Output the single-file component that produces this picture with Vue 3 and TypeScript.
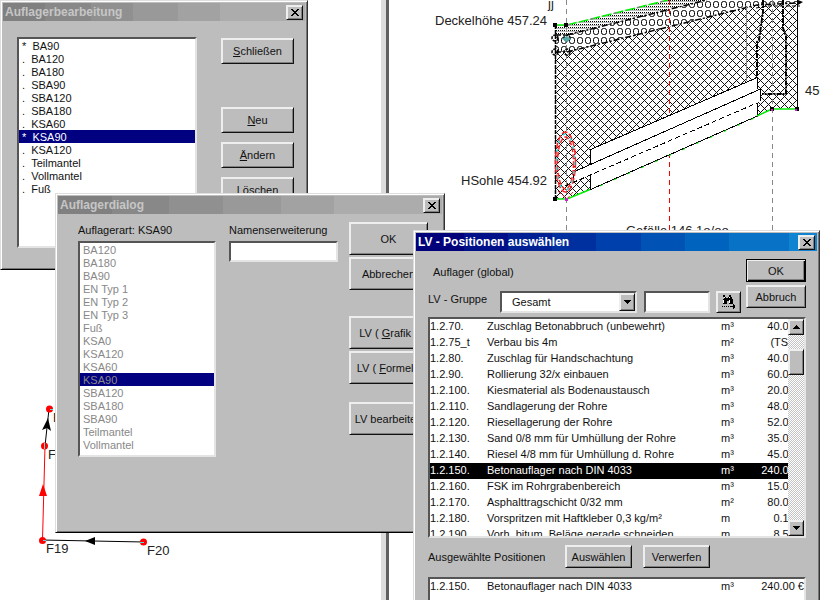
<script setup lang="ts">
import { ref } from 'vue'

interface Bedding {
  name: string
  used: boolean
}

interface Position {
  id: string
  text: string
  unit: string
  price: string
}

const beddings: Bedding[] = [
  { name: 'BA90', used: true },
  { name: 'BA120', used: false },
  { name: 'BA180', used: false },
  { name: 'SBA90', used: false },
  { name: 'SBA120', used: false },
  { name: 'SBA180', used: false },
  { name: 'KSA60', used: false },
  { name: 'KSA90', used: true },
  { name: 'KSA120', used: false },
  { name: 'Teilmantel', used: false },
  { name: 'Vollmantel', used: false },
  { name: 'Fuß', used: false },
]

const types: string[] = [
  'BA120', 'BA180', 'BA90', 'EN Typ 1', 'EN Typ 2', 'EN Typ 3', 'Fuß', 'KSA0',
  'KSA120', 'KSA60', 'KSA90', 'SBA120', 'SBA180', 'SBA90', 'Teilmantel', 'Vollmantel',
]

const positions: Position[] = [
  { id: '1.2.70.', text: 'Zuschlag Betonabbruch (unbewehrt)', unit: 'm³', price: '40.00 €' },
  { id: '1.2.75_t', text: 'Verbau bis 4m', unit: 'm²', price: '(TS)  €' },
  { id: '1.2.80.', text: 'Zuschlag für Handschachtung', unit: 'm³', price: '40.00 €' },
  { id: '1.2.90.', text: 'Rollierung 32/x einbauen', unit: 'm³', price: '60.00 €' },
  { id: '1.2.100.', text: 'Kiesmaterial als Bodenaustausch', unit: 'm³', price: '20.00 €' },
  { id: '1.2.110.', text: 'Sandlagerung der Rohre', unit: 'm³', price: '48.00 €' },
  { id: '1.2.120.', text: 'Riesellagerung der Rohre', unit: 'm³', price: '52.00 €' },
  { id: '1.2.130.', text: 'Sand 0/8 mm für Umhüllung der Rohre', unit: 'm³', price: '35.00 €' },
  { id: '1.2.140.', text: 'Riesel 4/8 mm für Umhüllung d. Rohre', unit: 'm³', price: '45.00 €' },
  { id: '1.2.150.', text: 'Betonauflager nach DIN 4033', unit: 'm³', price: '240.00 €' },
  { id: '1.2.160.', text: 'FSK im Rohrgrabenbereich', unit: 'm³', price: '15.00 €' },
  { id: '1.2.170.', text: 'Asphalttragschicht 0/32 mm', unit: 'm²', price: '80.00 €' },
  { id: '1.2.180.', text: 'Vorspritzen mit Haftkleber 0,3 kg/m²', unit: 'm', price: '0.10 €' },
  { id: '1.2.190.', text: 'Vorh. bitum. Beläge gerade schneiden', unit: 'm', price: '8.50 €' },
]

const bedding = ref('KSA90')
const beddingType = ref('KSA90')
const extension = ref('')
const group = ref('Gesamt')
const search = ref('')
const current = ref('1.2.150.')
const chosen = ref<Position[]>([positions[9]])
</script>

<template>
  <main class="desktop">
    <svg class="drawing" width="820" height="600" viewBox="0 0 820 600" aria-hidden="true">
      <defs>
        <pattern id="cross" width="8" height="8" patternUnits="userSpaceOnUse">
          <path d="M0 0h1v1h-1zM1 1h1v1h-1zM2 2h1v1h-1zM3 3h1v1h-1zM4 4h1v1h-1zM5 5h1v1h-1zM6 6h1v1h-1zM7 7h1v1h-1zM1 7h1v1h-1zM2 6h1v1h-1zM3 5h1v1h-1zM5 3h1v1h-1zM6 2h1v1h-1zM7 1h1v1h-1z" fill="#111" shape-rendering="crispEdges" />
        </pattern>
        <pattern id="dots" width="2" height="3" patternUnits="userSpaceOnUse">
          <rect width="1" height="1" fill="#000" />
          <rect y="1" width="2" height="1" fill="#bbb" />
        </pattern>
        <pattern id="gravel" width="8" height="9" patternUnits="userSpaceOnUse">
          <rect x="1.5" y="1.5" width="5" height="6" rx="2" fill="none" stroke="#000" />
        </pattern>
      </defs>

      <!-- trench profile -->
      <path d="M555 52H567L757 5L797 3V109H772L757 116L590 190L567 199H555Z" fill="url(#cross)" />
      <path d="M555 35H567L707 0H797V3L757 5L567 52H555Z" fill="#fff" />
      <path d="M555 35H567L707 0H797V3L757 5L567 52H555Z" fill="url(#gravel)" />
      <path d="M555 25H567L668 0H707L567 35H555Z" fill="url(#dots)" />
      <path d="M555 35H567L707 0M555 52H567L757 5L797 3" fill="none" stroke="#000" stroke-width="1.5" stroke-dasharray="6 2 2 2" />
      <path d="M555.5 25V199" stroke="#000" stroke-width="1.5" stroke-dasharray="4 1" />
      <path d="M797.5 0V109" stroke="#000" />
      <path d="M746.5 7V81" stroke="#888" />
      <path d="M555 25H567L668 0" fill="none" stroke="#0e0" stroke-width="1.5" stroke-dasharray="10 2" />
      <path d="M567 25L668 0" fill="none" stroke="#c4c" stroke-dasharray="3 21" />

      <!-- shaft on the right -->
      <path d="M763 0V12L761 26L759 40L757 42V90M783 0V28L786 36V94H762" fill="none" stroke="#000" stroke-width="2" stroke-dasharray="5 1 2 1" />
      <path d="M756 8L768 6H800" fill="none" stroke="#000" stroke-dasharray="4 2" />
      <path d="M798 0L803 2L798 5Z" />

      <!-- axes -->
      <path d="M566.5 0V230M772.5 0V230" stroke="#888" stroke-dasharray="5 4" />
      <rect x="669" width="1" height="230" fill="#fff" />
      <path d="M669.5 0V230" stroke="#f00" stroke-width="1" stroke-dasharray="5 4" />

      <!-- pipe -->
      <path d="M590 149.5L757 77.5V89L760 89V101L757 103V116L590 189.5V175L573 182V172L590 164Z" fill="#fff" />
      <path d="M590.5 164V149.5L757.5 77.5V89M573.5 182V172L760.5 89V101M590.5 175V189.5L757.5 116V103" fill="none" stroke="#000" shape-rendering="crispEdges" />
      <path d="M565 186L757 103" stroke="#000" stroke-dasharray="5 3" shape-rendering="crispEdges" />
      <path d="M590 189.5L567 199H555M757 116L772 109H797" fill="none" stroke="#0e0" stroke-width="1.5" />
      <path d="M600 186L757 117" fill="none" stroke="#0e0" stroke-dasharray="3 12" />

      <!-- shaft bottom -->
      <ellipse cx="565.5" cy="162" rx="10" ry="30" fill="none" stroke="#f22" stroke-width="1.5" stroke-dasharray="6 2" />
      <ellipse cx="565.5" cy="163" rx="8" ry="26" fill="none" stroke="#f22" stroke-width="1.5" stroke-dasharray="5 2" />
      <ellipse cx="565.5" cy="162" rx="9" ry="28" fill="none" stroke="#3dd" stroke-width="1.5" stroke-dasharray="3 6" />
      <path d="M558 191L567 199L573 192" fill="none" stroke="#e22" stroke-dasharray="4 2" />
      <path d="M553 23h4v4h-4zM564 23h4v4h-4zM553 197h4v4h-4zM770 107h4v4h-4zM795 107h4v4h-4z" />
      <path d="M565 198h3v3h-3zM771 109h2v2h-2zM795 109h2v2h-2z" fill="#c2c" />
      <g fill="none" stroke="#000" stroke-width="1.5" stroke-dasharray="3 1">
        <circle cx="555" cy="38" r="3" /><circle cx="567" cy="38" r="3" />
        <circle cx="555" cy="52" r="3" /><circle cx="567" cy="52" r="3" />
      </g>
      <path d="M562 39L567 36L571 39L567 42Z" fill="#5aa" />

      <g class="annotation">
        <text x="548" y="8">jj</text>
        <text x="435" y="25">Deckelhöhe 457.24</text>
        <text x="461" y="185">HSohle 454.92</text>
        <text x="805" y="95">450.99</text>
        <text x="626" y="235">Gefälle 146.1o/oo</text>
      </g>

      <!-- sewer network -->
      <path d="M45 446L49 409M144 542L42 540" stroke="#000" />
      <path d="M42.5 540L45 446" stroke="#f00" />
      <path d="M48 418L51 431L47 428L42 430ZM85 541L95 537V545Z" />
      <path d="M43 484L47 496H39Z" fill="#f00" />
      <g fill="#f00">
        <circle cx="49.5" cy="409" r="3.5" /><circle cx="44.5" cy="446" r="3.5" />
        <circle cx="42.5" cy="540.5" r="3.5" /><circle cx="143.5" cy="542" r="3.5" />
      </g>
      <path d="M50 409.5H53M44.5 443V449M43 540.5H46M140 542.5H144" stroke="#5dd" />
      <g class="annotation">
        <text x="53" y="422">F17</text>
        <text x="48" y="459">F18</text>
        <text x="46" y="553">F19</text>
        <text x="147" y="555">F20</text>
      </g>
    </svg>
    <div class="divider"></div>

    <section class="window editor" aria-label="Auflagerbearbeitung">
      <header class="title inactive">
        <h2>Auflagerbearbeitung</h2>
        <button class="close" aria-label="Fenster schließen"><svg width="8" height="7" viewBox="0 0 8 7"><path d="M0 0h2v1h1v1h2v-1h1v-1h2v1h-1v1h-1v1h-1v1h1v1h1v1h1v1h-2v-1h-1v-1h-2v1h-1v1h-2v-1h1v-1h1v-1h1v-1h-1v-1h-1v-1h-1z" /></svg></button>
      </header>
      <div class="body">
        <select v-model="bedding" class="list" size="12" aria-label="Auflager">
          <option v-for="b in beddings" :key="b.name" :value="b.name">{{ b.used ? '*' : '.' }}&nbsp;&nbsp;{{ b.name }}</option>
        </select>
        <div class="actions">
          <button class="btn"><u>S</u>chließen</button>
          <button class="btn apart"><u>N</u>eu</button>
          <button class="btn"><u>Ä</u>ndern</button>
          <button class="btn"><u>L</u>öschen</button>
        </div>
      </div>
    </section>

    <section class="window dialog" aria-label="Auflagerdialog">
      <header class="title inactive">
        <h2>Auflagerdialog</h2>
        <button class="close" aria-label="Fenster schließen"><svg width="8" height="7" viewBox="0 0 8 7"><path d="M0 0h2v1h1v1h2v-1h1v-1h2v1h-1v1h-1v1h-1v1h1v1h1v1h1v1h-2v-1h-1v-1h-2v1h-1v1h-2v-1h1v-1h1v-1h1v-1h-1v-1h-1v-1h-1z" /></svg></button>
      </header>
      <div class="body">
        <div class="field types">
          <label for="types">Auflagerart: KSA90</label>
          <select id="types" v-model="beddingType" class="list" size="16" disabled>
            <option v-for="t in types" :key="t" :value="t">{{ t }}</option>
          </select>
        </div>
        <div class="field extension">
          <label for="extension">Namenserweiterung</label>
          <input id="extension" v-model="extension" class="input" type="text" />
        </div>
        <div class="actions">
          <button class="btn">OK</button>
          <button class="btn">Abbrechen</button>
          <button class="btn apart"><span>LV ( <u>G</u>rafik )</span></button>
          <button class="btn"><span>LV ( <u>F</u>ormel )</span></button>
          <button class="btn edit">LV bearbeiten</button>
        </div>
      </div>
    </section>

    <section class="window picker" aria-label="LV - Positionen auswählen">
      <header class="title active">
        <h2>LV - Positionen auswählen</h2>
        <button class="close" aria-label="Fenster schließen"><svg width="8" height="7" viewBox="0 0 8 7"><path d="M0 0h2v1h1v1h2v-1h1v-1h2v1h-1v1h-1v1h-1v1h1v1h1v1h1v1h-2v-1h-1v-1h-2v1h-1v1h-2v-1h1v-1h1v-1h1v-1h-1v-1h-1v-1h-1z" /></svg></button>
      </header>
      <div class="body">
        <div class="top">
          <div class="filter">
            <p class="scope">Auflager (global)</p>
            <div class="row">
              <label for="group">LV - Gruppe</label>
              <div class="combo">
                <select id="group" v-model="group">
                  <option>Gesamt</option>
                </select>
                <span class="drop" aria-hidden="true"><svg width="7" height="4" viewBox="0 0 7 4"><path d="M0 0h7v1h-1v1h-1v1h-1v1h-1v-1h-1v-1h-1v-1h-1z" /></svg></span>
              </div>
              <input v-model="search" class="input" type="text" aria-label="Suchtext" />
              <button class="btn find" aria-label="Weitersuchen">
                <svg width="15" height="14" viewBox="0 0 15 14" shape-rendering="crispEdges">
                  <path d="M2 0h2v2h1v1h2v-1h1v-2h2v2h1v2h1v5h-4v-3h-2v3h-4v-5h1v-2h-1z" />
                  <path d="M2 5h1v3h-1zM8 5h1v3h-1zM3 2h1v1h-1zM8 2h1v1h-1z" fill="#fff" />
                  <path d="M1 11h1v1h-1zM3 11h1v1h-1zM5 11h1v1h-1zM7 11h1v1h-1zM9 11h5v1h-5zM12 9h1v5h-1zM13 10h1v3h-1z" />
                </svg>
              </button>
            </div>
          </div>
          <div class="actions">
            <button class="btn default">OK</button>
            <button class="btn">Abbruch</button>
          </div>
        </div>

        <div class="sheet catalogue">
          <table>
            <tbody>
              <tr v-for="p in positions" :key="p.id" :class="{ current: p.id === current }" @click="current = p.id">
                <td class="id">{{ p.id }}</td>
                <td>{{ p.text }}</td>
                <td class="unit">{{ p.unit }}</td>
                <td class="price">{{ p.price }}</td>
              </tr>
            </tbody>
          </table>
          <div class="scrollbar">
            <button class="step" aria-label="Nach oben"><svg width="7" height="4" viewBox="0 0 7 4"><path d="M3 0h1v1h1v1h1v1h1v1h-7v-1h1v-1h1v-1h1z" /></svg></button>
            <span class="thumb"></span>
            <button class="step" aria-label="Nach unten"><svg width="7" height="4" viewBox="0 0 7 4"><path d="M0 0h7v1h-1v1h-1v1h-1v1h-1v-1h-1v-1h-1v-1h-1z" /></svg></button>
          </div>
        </div>

        <div class="selection">
          <p>Ausgewählte Positionen</p>
          <button class="btn">Auswählen</button>
          <button class="btn">Verwerfen</button>
        </div>

        <div class="sheet chosen">
          <table>
            <tbody>
              <tr v-for="p in chosen" :key="p.id">
                <td class="id">{{ p.id }}</td>
                <td>{{ p.text }}</td>
                <td class="unit">{{ p.unit }}</td>
                <td class="price">{{ p.price }}</td>
              </tr>
            </tbody>
          </table>
        </div>
      </div>
    </section>
  </main>
</template>

<style>
html,
body,
#app {
  height: 100%;
}

body {
  overflow: hidden;
}
</style>

<style scoped>
.desktop,
.desktop * {
  box-sizing: border-box;
}

.desktop {
  position: relative;
  height: 100%;
  overflow: hidden;
  background: #fff;
  color: #111;
  font-family: "Liberation Sans", Arial, sans-serif;
  font-size: 11px;
  line-height: 16px;
}

h2,
p {
  margin: 0;
}

button,
input,
select {
  margin: 0;
  padding: 0;
  border-radius: 0;
  color: inherit;
  font: inherit;
  outline: none;
}

.drawing {
  position: absolute;
  top: 0;
  left: 0;
}

.annotation {
  fill: #222;
  font-size: 13px;
}

.divider {
  position: absolute;
  top: 0;
  bottom: 0;
  left: 381px;
  width: 8px;
  border-right: 3px solid #606060;
  background: #dcdcdc;
}

/* window frames */
.window {
  position: absolute;
  border: 1px solid;
  border-color: #dedede #333 #000 #dedede;
  padding: 2px;
  background: #bdbdbd;
  box-shadow: inset 1px 1px #fff, inset -1px -1px #777;
}

.editor {
  top: 0;
  left: 0;
  width: 308px;
}

.dialog {
  top: 193px;
  left: 55px;
  width: 390px;
}

.picker {
  top: 230px;
  right: 0;
  left: 413px;
}

.title {
  display: flex;
  align-items: center;
  justify-content: space-between;
  height: 18px;
  padding: 0 2px;
}

.title h2 {
  font-size: 12px;
  font-weight: bold;
}

.inactive {
  background: linear-gradient(90deg, #808080 14%, #888 14% 29%, #909090 29% 43%, #999 43% 58%, #a2a2a2 58% 72%, #acacac 72%);
  color: #c6c6c6;
}

.active {
  background: linear-gradient(90deg, #00007b 12%, #001088 12% 23%, #002094 23% 34%, #0030a0 34% 45%, #0040ac 45% 56%, #0052b5 56% 67%, #0063bd 67% 78%, #0873c6 78% 93%, #1084d0 93%);
  color: #fff;
}

.close,
.btn,
.drop,
.step,
.thumb {
  display: flex;
  align-items: center;
  justify-content: center;
  border: 1px solid;
  border-color: #eee #111 #111 #eee;
  background: #bdbdbd;
  box-shadow: inset 1px 1px #eee, inset -1px -1px #808080;
  color: #111;
  white-space: nowrap;
}

.close {
  width: 17px;
  height: 15px;
}

.default {
  border-color: #000;
  box-shadow: inset 1px 1px #eee, inset -1px -1px #000, inset -2px -2px #808080;
}

.actions {
  display: flex;
  flex-direction: column;
}

/* sunken fields */
.list,
.input,
.combo,
.sheet {
  border: 2px solid;
  border-color: #555 #e4e4e4 #e4e4e4 #555;
  background: #fff;
}

.list {
  display: block;
  width: 100%;
  overflow: hidden;
}

.list option {
  min-height: 13px;
  height: 13px;
  padding: 1px 3px 0;
  line-height: 12px;
}

.list option:checked {
  background: #000080 linear-gradient(#000080, #000080);
  color: #fff;
}

.list:disabled {
  opacity: 1;
}

.list:disabled option,
.list:disabled option:checked {
  color: #888;
}

/* Auflagerbearbeitung */
.editor .body {
  display: flex;
  gap: 24px;
  padding: 16px 11px 19px 14px;
}

.editor .list {
  flex: 1;
  height: 211px;
}

.editor .actions {
  width: 73px;
  gap: 9px;
  padding-top: 1px;
}

.editor .btn {
  height: 26px;
}

.editor .apart {
  margin-top: 34px;
}

/* Auflagerdialog */
.dialog .body {
  display: flex;
  align-items: flex-start;
  padding: 8px 14px 73px 20px;
}

.field label {
  display: block;
  height: 16px;
  margin-bottom: 3px;
}

.types {
  width: 138px;
  margin-right: 13px;
}

.types .list {
  height: 216px;
}

.extension {
  flex: 1;
  margin-right: 11px;
}

.extension .input {
  width: 100%;
}

.input {
  display: block;
  height: 21px;
  padding: 0 4px;
}

.dialog .actions {
  width: 79px;
  gap: 2px;
}

.dialog .btn {
  height: 33px;
}

.dialog .apart {
  margin-top: 24px;
}

.dialog .edit {
  margin-top: 16px;
}

/* LV - Positionen auswählen */
.picker .body {
  padding: 8px 11px 0 12px;
}

.top {
  display: flex;
  justify-content: space-between;
}

.top .actions {
  width: 60px;
  gap: 3px;
}

.top .actions .btn {
  height: 23px;
}

.scope {
  padding: 5px 5px 11px;
}

.row {
  display: flex;
  align-items: flex-start;
}

.row label {
  width: 72px;
}

.combo {
  display: flex;
  width: 137px;
  height: 22px;
  margin-right: 7px;
}

.combo select {
  flex: 1;
  min-width: 0;
  appearance: none;
  border: 0;
  padding-left: 10px;
  background: transparent;
}

.drop {
  width: 16px;
}

.row .input {
  width: 66px;
  height: 22px;
  margin-right: 6px;
}

.find {
  width: 25px;
  height: 22px;
}

.sheet {
  overflow: hidden;
}

.catalogue {
  position: relative;
  height: 221px;
  margin-top: 4px;
}

table {
  width: 100%;
  border-collapse: collapse;
  table-layout: fixed;
}

td {
  height: 16px;
  padding: 0 0 2px;
  line-height: 14px;
  white-space: nowrap;
}

.id {
  width: 57px;
}

.unit {
  width: 40px;
}

.price {
  width: 43px;
  text-align: right;
  white-space: pre;
}

.current {
  background: #000;
  color: #fff;
}

.scrollbar {
  position: absolute;
  top: 0;
  right: 0;
  bottom: 0;
  display: flex;
  flex-direction: column;
  width: 16px;
  background: repeating-conic-gradient(#fff 0 25%, #c4c4c4 0 50%) 0 0 / 2px 2px;
}

.step {
  height: 16px;
}

.thumb {
  height: 26px;
  margin: 14px 0 auto;
}

.selection {
  display: flex;
  align-items: center;
  padding: 7px 0 9px;
}

.selection p {
  width: 137px;
}

.selection .btn {
  width: 67px;
  height: 23px;
  margin-right: 11px;
}

.chosen {
  height: 64px;
}
</style>
